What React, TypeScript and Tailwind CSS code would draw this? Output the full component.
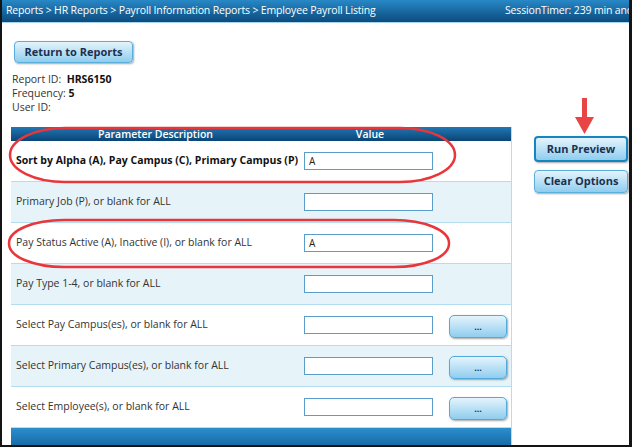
import React from "react";

const rows = [
  { label: "Sort by Alpha (A), Pay Campus (C), Primary Campus (P)", value: "A", bold: true, pick: false },
  { label: "Primary Job (P), or blank for ALL", value: "", bold: false, pick: false },
  { label: "Pay Status Active (A), Inactive (I), or blank for ALL", value: "A", bold: false, pick: false },
  { label: "Pay Type 1-4, or blank for ALL", value: "", bold: false, pick: false },
  { label: "Select Pay Campus(es), or blank for ALL", value: "", bold: false, pick: true },
  { label: "Select Primary Campus(es), or blank for ALL", value: "", bold: false, pick: true },
  { label: "Select Employee(s), or blank for ALL", value: "", bold: false, pick: true },
];

function BlueButton({ children, className = "" }: any) {
  return (
    <button
      className={
        "rounded-[4px] bg-linear-to-b from-[#e4f4fc] to-[#8fcdee] text-[#1b3050] font-bold shadow-[1px_1px_2px_rgba(0,0,0,0.35)] " +
        className
      }
    >
      {children}
    </button>
  );
}

export default function App() {
  return (
    <div className="relative w-[632px] h-[447px] overflow-hidden bg-white border-l-2 border-r-[3px] border-b-2 border-[#141414] font-['Open_Sans',sans-serif]">
      {/* breadcrumb bar */}
      <div className="flex h-[23px] items-center bg-linear-to-b from-[#2888c6] to-[#0b4c7e] border-b border-[#a6d3ef] text-white text-[10.5px] tracking-[-0.15px] whitespace-nowrap">
        <div className="flex-1 pl-1">Reports &gt; HR Reports &gt; Payroll Information Reports &gt; Employee Payroll Listing</div>
        <div className="w-[124px] shrink-0 overflow-hidden">SessionTimer: 239 min and</div>
      </div>

      <div className="flex">
        <div className="pl-[9px]">
          <BlueButton className="ml-[3px] mt-[18px] w-[119px] h-[22px] text-[11px] border border-[#5aaedc]">
            Return to Reports
          </BlueButton>

          <div className="mt-[9px] pl-[1px] text-[10.5px] leading-[14px] text-[#333]">
            <div>
              Report ID:&nbsp;&nbsp;<span className="font-bold text-[#111]">HRS6150</span>
            </div>
            <div>
              Frequency: <span className="font-bold text-[#111]">5</span>
            </div>
            <div>User ID:</div>
          </div>

          {/* parameter table */}
          <div className="mt-[13px] w-[501px] border-r border-[#b3def2]">
            <div className="grid grid-cols-[289px_140px_72px] h-[14px] items-center bg-linear-to-b from-[#2178b4] to-[#0b4576] text-white text-[10.5px] font-semibold leading-none">
              <div className="text-center">Parameter Description</div>
              <div className="text-center">Value</div>
              <div />
            </div>
            {rows.map((r, i) => (
              <div
                key={r.label}
                className={
                  "grid grid-cols-[289px_140px_72px] h-[41px] items-center border-b border-[#b3def2] " +
                  (i % 2 === 1 ? "bg-[#e6f4fa]" : "bg-white")
                }
              >
                <div className={"pl-[5px] text-[10.5px] " + (r.bold ? "font-bold text-[#111]" : "text-[#333]")}>
                  {r.label}
                </div>
                <div className="pl-[4px]">
                  <div className="w-[129px] h-[18px] border-[1.5px] border-[#5b9dca] bg-white flex items-center pl-1 text-[10px] text-[#222]">
                    {r.value}
                  </div>
                </div>
                <div className="pl-[9px]">
                  {r.pick && (
                    <BlueButton className="w-[58px] h-[23px] text-[9px] leading-none border border-[#52a9da] rounded-[5px]">
                      ...
                    </BlueButton>
                  )}
                </div>
              </div>
            ))}
            <div className="h-[18px] bg-linear-to-b from-[#2a8fcc] to-[#166aa6]" />
          </div>
        </div>

        <div className="ml-[22px] mt-[113px] flex flex-col gap-[8px]">
          <BlueButton className="w-[94px] h-[26px] text-[11px] border-2 border-[#1585c2]">Run Preview</BlueButton>
          <BlueButton className="w-[94px] h-[23px] text-[11px] border border-[#5aaedc]">Clear Options</BlueButton>
        </div>
      </div>

      {/* annotation overlay */}
      <svg className="absolute left-0 top-0 pointer-events-none" width="632" height="447" viewBox="0 0 632 447">
        <rect x="8" y="128" width="445" height="54" rx="55" ry="27" fill="none" stroke="#e8363b" strokeWidth="2.5" />
        <rect x="7" y="220" width="440" height="47" rx="55" ry="23" fill="none" stroke="#e8363b" strokeWidth="2.5" />
        <rect x="580" y="98" width="5" height="21" fill="#e84545" />
        <polygon points="573,117 592,117 582.5,134" fill="#e84545" />
      </svg>
    </div>
  );
}
